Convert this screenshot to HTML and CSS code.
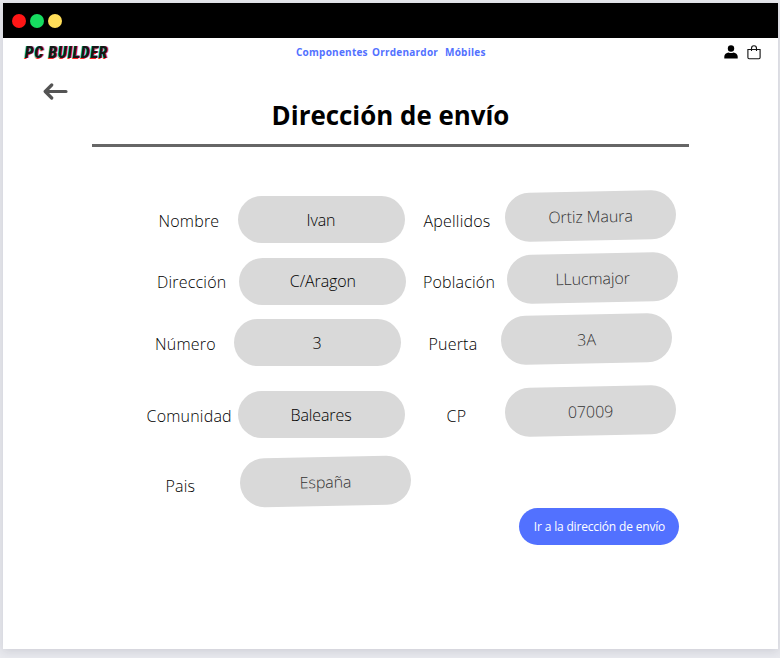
FILE: index.html
```html
<!DOCTYPE html>
<html lang="es">
<head>
<meta charset="utf-8">
<title>Dirección de envío</title>
<link rel="stylesheet" href="styles.css">
</head>
<body>
<div class="window">
  <div class="titlebar"><span class="dot red"></span><span class="dot green"></span><span class="dot yellow"></span></div>
  <header class="header">
    <div class="logo"><span>PC BUILDER</span></div>
    <nav class="nav"><a class="n1">Componentes</a><a class="n2">Orrdenardor</a><a class="n3">Móbiles</a></nav>
    <div class="icons">
      <svg width="14" height="14" viewBox="0 0 14 14"><circle cx="7" cy="3.5" r="3.2"/><path d="M.3 13.6v-2.200C.3 8.900 2.400 7.800 4.500 7.400Q7 8.600 9.500 7.400c2.100.4 4.200 1.500 4.200 4v2.200z"/></svg>
      <svg class="bag" width="14" height="15" viewBox="0 0 14 15"><path d="M.9 4.500h12.200v8.100q0 1.200-1.200 1.200H2.100Q.9 13.800.9 12.600z M4.500 6V3.500a2.500 2.700 0 0 1 5 0V6"/></svg>
    </div>
  </header>
  <main class="main">
    <svg class="back" width="25" height="17" viewBox="0 0 25 17"><path d="M23 8.500H2.500M8.700 2L2.200 8.500l6.500 6.500"/></svg>
    <h1>Dirección de envío</h1>
    <form class="form">
      <div class="row r1"><label>Nombre</label><div class="pill">Ivan</div><label class="second">Apellidos</label><div class="pill tilt">Ortiz Maura</div></div>
      <div class="row r2"><label>Dirección</label><div class="pill">C/Aragon</div><label class="second">Población</label><div class="pill tilt">LLucmajor</div></div>
      <div class="row r3"><label>Número</label><div class="pill">3</div><label class="second">Puerta</label><div class="pill tilt">3A</div></div>
      <div class="row r4"><label>Comunidad</label><div class="pill">Baleares</div><label class="second">CP</label><div class="pill tilt">07009</div></div>
      <div class="row r5"><label>Pais</label><div class="pill tilt">España</div></div>
      <button type="button" class="submit">Ir a la dirección de envío</button>
    </form>
  </main>
</div>
</body>
</html>
```
FILE: styles.css
```css
* { box-sizing: border-box; }
body {
  margin: 0;
  height: 658px;
  padding: 3px 2px 9px 3px;
  overflow: hidden;
  background: #e8e9ee;
  font-family: "Open Sans", sans-serif;
  color: #000;
}
.window { height: 646px; background: #fff; box-shadow: 0 2px 9px rgba(40, 45, 65, .14); }
.titlebar { height: 35px; background: #000; display: flex; align-items: center; gap: 4px; padding-left: 9.400px; }
.dot { width: 14px; height: 14px; border-radius: 50%; }
.red { background: #ff1616; }
.green { background: #16dc60; }
.yellow { background: #ffde59; }

.header { display: flex; height: 28px; align-items: center; padding: 0 17px 0 22px; }
.logo { width: 271px; line-height: 20px; }
.logo span {
  display: inline-block;
  font: italic 900 16.5px/20px Roboto, sans-serif;
  letter-spacing: 1.5px;
  transform: scaleX(.8);
  transform-origin: 0 50%;
  white-space: nowrap;
  color: #161616;
  text-shadow: -1.2px -.2px #00dfe8, 1.4px .3px #ff2020, -.8px .9px #ff2020, 1.6px -.5px #00dfe8;
}
.nav { display: flex; margin-top: -1px; font-size: 10px; font-weight: 700; letter-spacing: .24px; color: #5271ff; white-space: nowrap; }
.n1 { width: 76px; }
.n2 { width: 73px; }
.icons { display: flex; gap: 9px; margin-left: auto; align-items: center; }
.bag { fill: none; stroke: #111; stroke-width: 1.1; }

.main { padding: 17px 0 0; }
.back { display: block; margin-left: 40px; fill: none; stroke: #545454; stroke-width: 3.2; stroke-linecap: round; stroke-linejoin: round; }
h1 {
  margin: -2px 89px 0 89px;
  height: 49px;
  border-bottom: 3px solid #666;
  font-size: 25.9px;
  font-weight: 700;
  line-height: 34px;
  text-align: center;
}
.form { display: flex; flex-direction: column; padding-top: 47.500px; font-size: 16px; font-weight: 300; }
.row { display: flex; height: 50px; align-items: center; white-space: nowrap; }
label { letter-spacing: .2px; padding-top: 2px; }
.pill {
  display: flex;
  flex: none;
  align-items: center;
  justify-content: center;
  width: 167px;
  height: 47px;
  border-radius: 25px;
  background: #d9d9d9;
  letter-spacing: -.1px;
}
.second { margin-left: 19px; }
.tilt { width: 171px; height: 49px; color: #333; transform: translateY(-3.500px) rotate(-1.1deg); }
.r1 { padding-left: 155.500px; }
.r1 label:first-child { width: 79px; }
.r1 .second { width: 81.500px; }
.r2 { padding-left: 154px; margin-top: 11.500px; }
.r2 label:first-child { width: 82.400px; }
.r2 .second { width: 84.100px; margin-left: 16.500px; }
.r3 { padding-left: 152px; margin-top: 11.500px; }
.r3 label:first-child { width: 78.500px; }
.r3 .second { width: 72.500px; margin-left: 28px; }
.r4 { padding-left: 143.500px; margin-top: 22px; }
.r4 label:first-child { width: 91px; }
.r4 .second { width: 58px; margin-left: 42px; }
.r5 { padding-left: 162.500px; margin-top: 17px; }
.r5 label:first-child { width: 74.500px; padding-top: 8px; }
.r5 .tilt { transform: rotate(-1.1deg); }
.submit {
  align-self: flex-end;
  width: 160px;
  height: 37px;
  margin: 1px 99px 0 0;
  padding: 0 0 0 1px;
  border: 0;
  border-radius: 19px;
  background: #5271ff;
  color: #fff;
  font: 400 12px "Open Sans", sans-serif;
  letter-spacing: -.17px;
  white-space: nowrap;
}
```
